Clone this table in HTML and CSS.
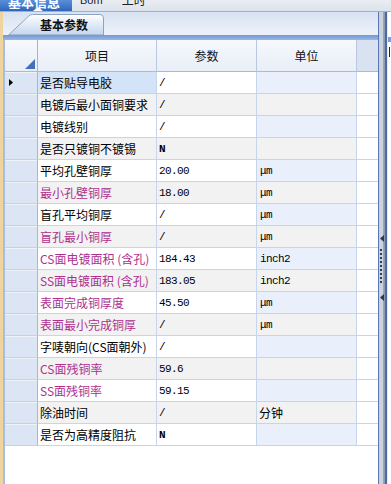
FILE: index.html
```html
<!DOCTYPE html>
<html lang="zh">
<head>
<meta charset="utf-8">
<title>基本参数</title>
<link rel="stylesheet" href="styles.css">
</head>
<body>
<div class="topbar">
  <div class="maintab"><span class="maintab-label">基本信息</span><span class="caret"></span></div>
  <span class="toplink bom">Bom</span>
  <span class="toplink hours">工时</span>
</div>
<div class="workarea">
  <div class="edge"></div>
  <div class="content">
    <div class="tabstrip">
      <div class="tab">
        <svg class="tab-shape" width="97" height="21" viewBox="0 0 97 21">
          <defs>
            <linearGradient id="tg" x1="0" y1="0" x2="0" y2="1">
              <stop offset="0" stop-color="#ffffff"/>
              <stop offset="1" stop-color="#c3d5ef"/>
            </linearGradient>
          </defs>
          <path d="M0.5,21 L21,1.8 Q22.5,0.5 24.5,0.5 L92,0.5 Q95.5,0.5 95.5,4 L95.5,21 Z" fill="url(#tg)" stroke="#8da3c4" stroke-width="1"/>
        </svg>
        <span class="tab-label">基本参数</span>
      </div>
    </div>
    <div class="panelbar"></div>
    <div class="gridwrap">
      <div class="grid">
        <div class="hc corner"><svg width="10" height="10" viewBox="0 0 10 10"><polygon points="10,0 10,10 0,10" fill="#4171bb"/></svg></div>
        <div class="hc">项目</div>
        <div class="hc">参数</div>
        <div class="hc">单位</div>
        <div class="hc blank"></div>

        <div class="rh"><svg width="4" height="7" viewBox="0 0 4 7"><polygon points="0,0 4,3.5 0,7" fill="#000"/></svg></div>
        <div class="c name selected">是否贴导电胶</div>
        <div class="c val">/</div>
        <div class="c unit"></div>
        <div class="c pad"></div>

        <div class="rh"></div>
        <div class="c name alt">电镀后最小面铜要求</div>
        <div class="c val alt">/</div>
        <div class="c unit alt"></div>
        <div class="c pad"></div>

        <div class="rh"></div>
        <div class="c name">电镀线别</div>
        <div class="c val">/</div>
        <div class="c unit"></div>
        <div class="c pad"></div>

        <div class="rh"></div>
        <div class="c name alt">是否只镀铜不镀锡</div>
        <div class="c val strong alt">N</div>
        <div class="c unit alt"></div>
        <div class="c pad"></div>

        <div class="rh"></div>
        <div class="c name">平均孔壁铜厚</div>
        <div class="c val">20.00</div>
        <div class="c unit">μm</div>
        <div class="c pad"></div>

        <div class="rh"></div>
        <div class="c name hl alt">最小孔壁铜厚</div>
        <div class="c val alt">18.00</div>
        <div class="c unit alt">μm</div>
        <div class="c pad"></div>

        <div class="rh"></div>
        <div class="c name">盲孔平均铜厚</div>
        <div class="c val">/</div>
        <div class="c unit">μm</div>
        <div class="c pad"></div>

        <div class="rh"></div>
        <div class="c name hl alt">盲孔最小铜厚</div>
        <div class="c val alt">/</div>
        <div class="c unit alt">μm</div>
        <div class="c pad"></div>

        <div class="rh"></div>
        <div class="c name hl">CS面电镀面积 (含孔)</div>
        <div class="c val">184.43</div>
        <div class="c unit">inch2</div>
        <div class="c pad"></div>

        <div class="rh"></div>
        <div class="c name hl alt">SS面电镀面积 (含孔)</div>
        <div class="c val alt">183.05</div>
        <div class="c unit alt">inch2</div>
        <div class="c pad"></div>

        <div class="rh"></div>
        <div class="c name hl">表面完成铜厚度</div>
        <div class="c val">45.50</div>
        <div class="c unit">μm</div>
        <div class="c pad"></div>

        <div class="rh"></div>
        <div class="c name hl alt">表面最小完成铜厚</div>
        <div class="c val alt">/</div>
        <div class="c unit alt">μm</div>
        <div class="c pad"></div>

        <div class="rh"></div>
        <div class="c name">字唛朝向(CS面朝外)</div>
        <div class="c val">/</div>
        <div class="c unit"></div>
        <div class="c pad"></div>

        <div class="rh"></div>
        <div class="c name hl alt">CS面残铜率</div>
        <div class="c val alt">59.6</div>
        <div class="c unit alt"></div>
        <div class="c pad"></div>

        <div class="rh"></div>
        <div class="c name hl">SS面残铜率</div>
        <div class="c val">59.15</div>
        <div class="c unit"></div>
        <div class="c pad"></div>

        <div class="rh"></div>
        <div class="c name alt">除油时间</div>
        <div class="c val alt">/</div>
        <div class="c unit cjk alt">分钟</div>
        <div class="c pad"></div>

        <div class="rh"></div>
        <div class="c name">是否为高精度阻抗</div>
        <div class="c val strong">N</div>
        <div class="c unit"></div>
        <div class="c pad"></div>
      </div>
    </div>
  </div>
  <div class="splitter">
    <svg class="arrow" width="4" height="7" viewBox="0 0 4 7"><polygon points="4,0 4,7 0,3.5" fill="#2b3958"/></svg>
    <div class="grip"></div>
    <svg class="arrow second" width="4" height="7" viewBox="0 0 4 7"><polygon points="4,0 4,7 0,3.5" fill="#2b3958"/></svg>
  </div>
  <div class="sidepanel">
    <div class="sidebar-bar"></div>
    <div class="sidebar-mark"></div>
  </div>
</div>
</body>
</html>
```

FILE: styles.css
```css
* { box-sizing: border-box; }

html, body {
  margin: 0;
  padding: 0;
}

body {
  width: 391px;
  height: 484px;
  overflow: hidden;
  background: #ffffff;
  font-family: "Noto Sans CJK SC", "Noto Sans", sans-serif;
  font-size: 12px;
  color: #000;
}

/* ---------- top bar ---------- */
.topbar {
  height: 12px;
  display: flex;
  align-items: flex-start;
  background: linear-gradient(#e9edf3, #dde3ec);
  border-bottom: 1px solid #9fb0c8;
  overflow: hidden;
}

.maintab {
  position: relative;
  width: 72px;
  height: 11px;
  background: linear-gradient(#5a8fd8, #2f66ba);
  overflow: hidden;
  padding-left: 8px;
}

.maintab-label {
  display: block;
  color: #fff;
  font-weight: bold;
  font-size: 13px;
  line-height: 13px;
  transform: translateY(-5px);
  white-space: nowrap;
}

.caret {
  position: absolute;
  left: 33px;
  bottom: 0;
  width: 0;
  height: 0;
  border-left: 5px solid transparent;
  border-right: 5px solid transparent;
  border-bottom: 4px solid #ffffff;
}

.toplink {
  display: block;
  font-size: 12px;
  line-height: 12px;
  color: #222;
  transform: translateY(-6px);
  white-space: nowrap;
}

.bom {
  margin-left: 8px;
  font-family: "Liberation Sans", sans-serif;
  font-size: 11px;
}

.hours {
  margin-left: 19px;
}

/* ---------- work area ---------- */
.workarea {
  display: flex;
  height: 472px;
}

.edge {
  width: 3px;
  background: #efd49e;
}

.content {
  width: 375px;
  display: flex;
  flex-direction: column;
}

.tabstrip {
  height: 23px;
  padding: 2px 0 0 5px;
  background: linear-gradient(#d8e2f1, #edf2fa);
  display: flex;
  align-items: flex-end;
}

.tab {
  position: relative;
  width: 97px;
  height: 21px;
}

.tab-shape {
  position: absolute;
  left: 0;
  top: 0;
}

.tab-label {
  position: relative;
  display: block;
  padding-left: 32px;
  font-weight: bold;
  font-size: 12px;
  line-height: 21px;
  color: #111;
}

.panelbar {
  height: 5px;
  background: linear-gradient(#7198d2, #9ab7e3);
}

.gridwrap {
  flex: 1;
  border-left: 2px solid #a8bedf;
  background: #fff;
}

.grid {
  display: grid;
  grid-template-columns: 33px 119px 100px 100px 21px;
  grid-template-rows: 32px;
  grid-auto-rows: 22px;
}

/* header */
.hc {
  display: flex;
  align-items: center;
  justify-content: center;
  background: linear-gradient(#f6f8fc, #e8eef8);
  border-right: 1px solid #b7c8e0;
  border-bottom: 1px solid #a6bbda;
  font-size: 12px;
  color: #111;
}

.hc.corner {
  align-items: flex-end;
  justify-content: flex-end;
  padding: 0 2px 2px 0;
  border-right-color: #9fb5d6;
}

.hc.blank {
  background: #d8e2f0;
  border-right: none;
}

/* row header */
.rh {
  display: flex;
  align-items: center;
  padding-left: 4px;
  background: #dbe5f3;
  border-right: 1px solid #a3b9da;
  border-bottom: 1px solid #c3d2e9;
  box-shadow: inset 0 1px 0 #eef3fa;
}

/* data cells */
.c {
  display: flex;
  align-items: center;
  padding-left: 2px;
  background: #ffffff;
  border-right: 1px solid #c6d5eb;
  border-bottom: 1px solid #c6d5eb;
  white-space: nowrap;
  overflow: hidden;
}

.c.alt { background: #f2f2f2; }

.c.selected { background: #d3e3f8; }

.c.hl { color: #ae2f8f; }

.c.val,
.c.unit {
  font-family: "Liberation Mono", "DejaVu Sans Mono", monospace;
  font-size: 11px;
  letter-spacing: -0.6px;
}

.c.strong { font-weight: bold; }

.c.unit { background: #e9f0fb; padding-left: 3px; }
.c.unit.alt { background: #f2f2f2; }

.c.unit.cjk {
  font-family: "Noto Sans CJK SC", sans-serif;
  font-size: 12px;
  letter-spacing: 0;
  padding-left: 2px;
}

.c.pad {
  background: #ffffff;
  border-right: none;
}

/* ---------- splitter ---------- */
.splitter {
  width: 10px;
  display: flex;
  flex-direction: column;
  align-items: flex-start;
  padding: 223px 0 0 2px;
  background: linear-gradient(to right,
    #5777b2 0, #5777b2 1px,
    #ccd2dc 1px, #ccd2dc 5px,
    #9eabc2 5px, #8797b4 7px,
    #4f6a9c 7px, #4f6a9c 9px,
    #e6eaf0 9px);
}

.arrow { display: block; }

.grip {
  margin-top: 7px;
  width: 2px;
  height: 36px;
  background: repeating-linear-gradient(#2f3c5a 0, #2f3c5a 2px, transparent 2px, transparent 4px);
}

.arrow.second { margin-top: 9px; }

/* ---------- side panel sliver ---------- */
.sidepanel {
  width: 3px;
  background: #ffffff;
}

.sidebar-bar {
  margin-top: 25px;
  height: 5px;
  background: #7d9fd4;
}

.sidebar-mark {
  margin: 5px 0 0 1px;
  width: 1px;
  height: 10px;
  background: #222;
}
```
